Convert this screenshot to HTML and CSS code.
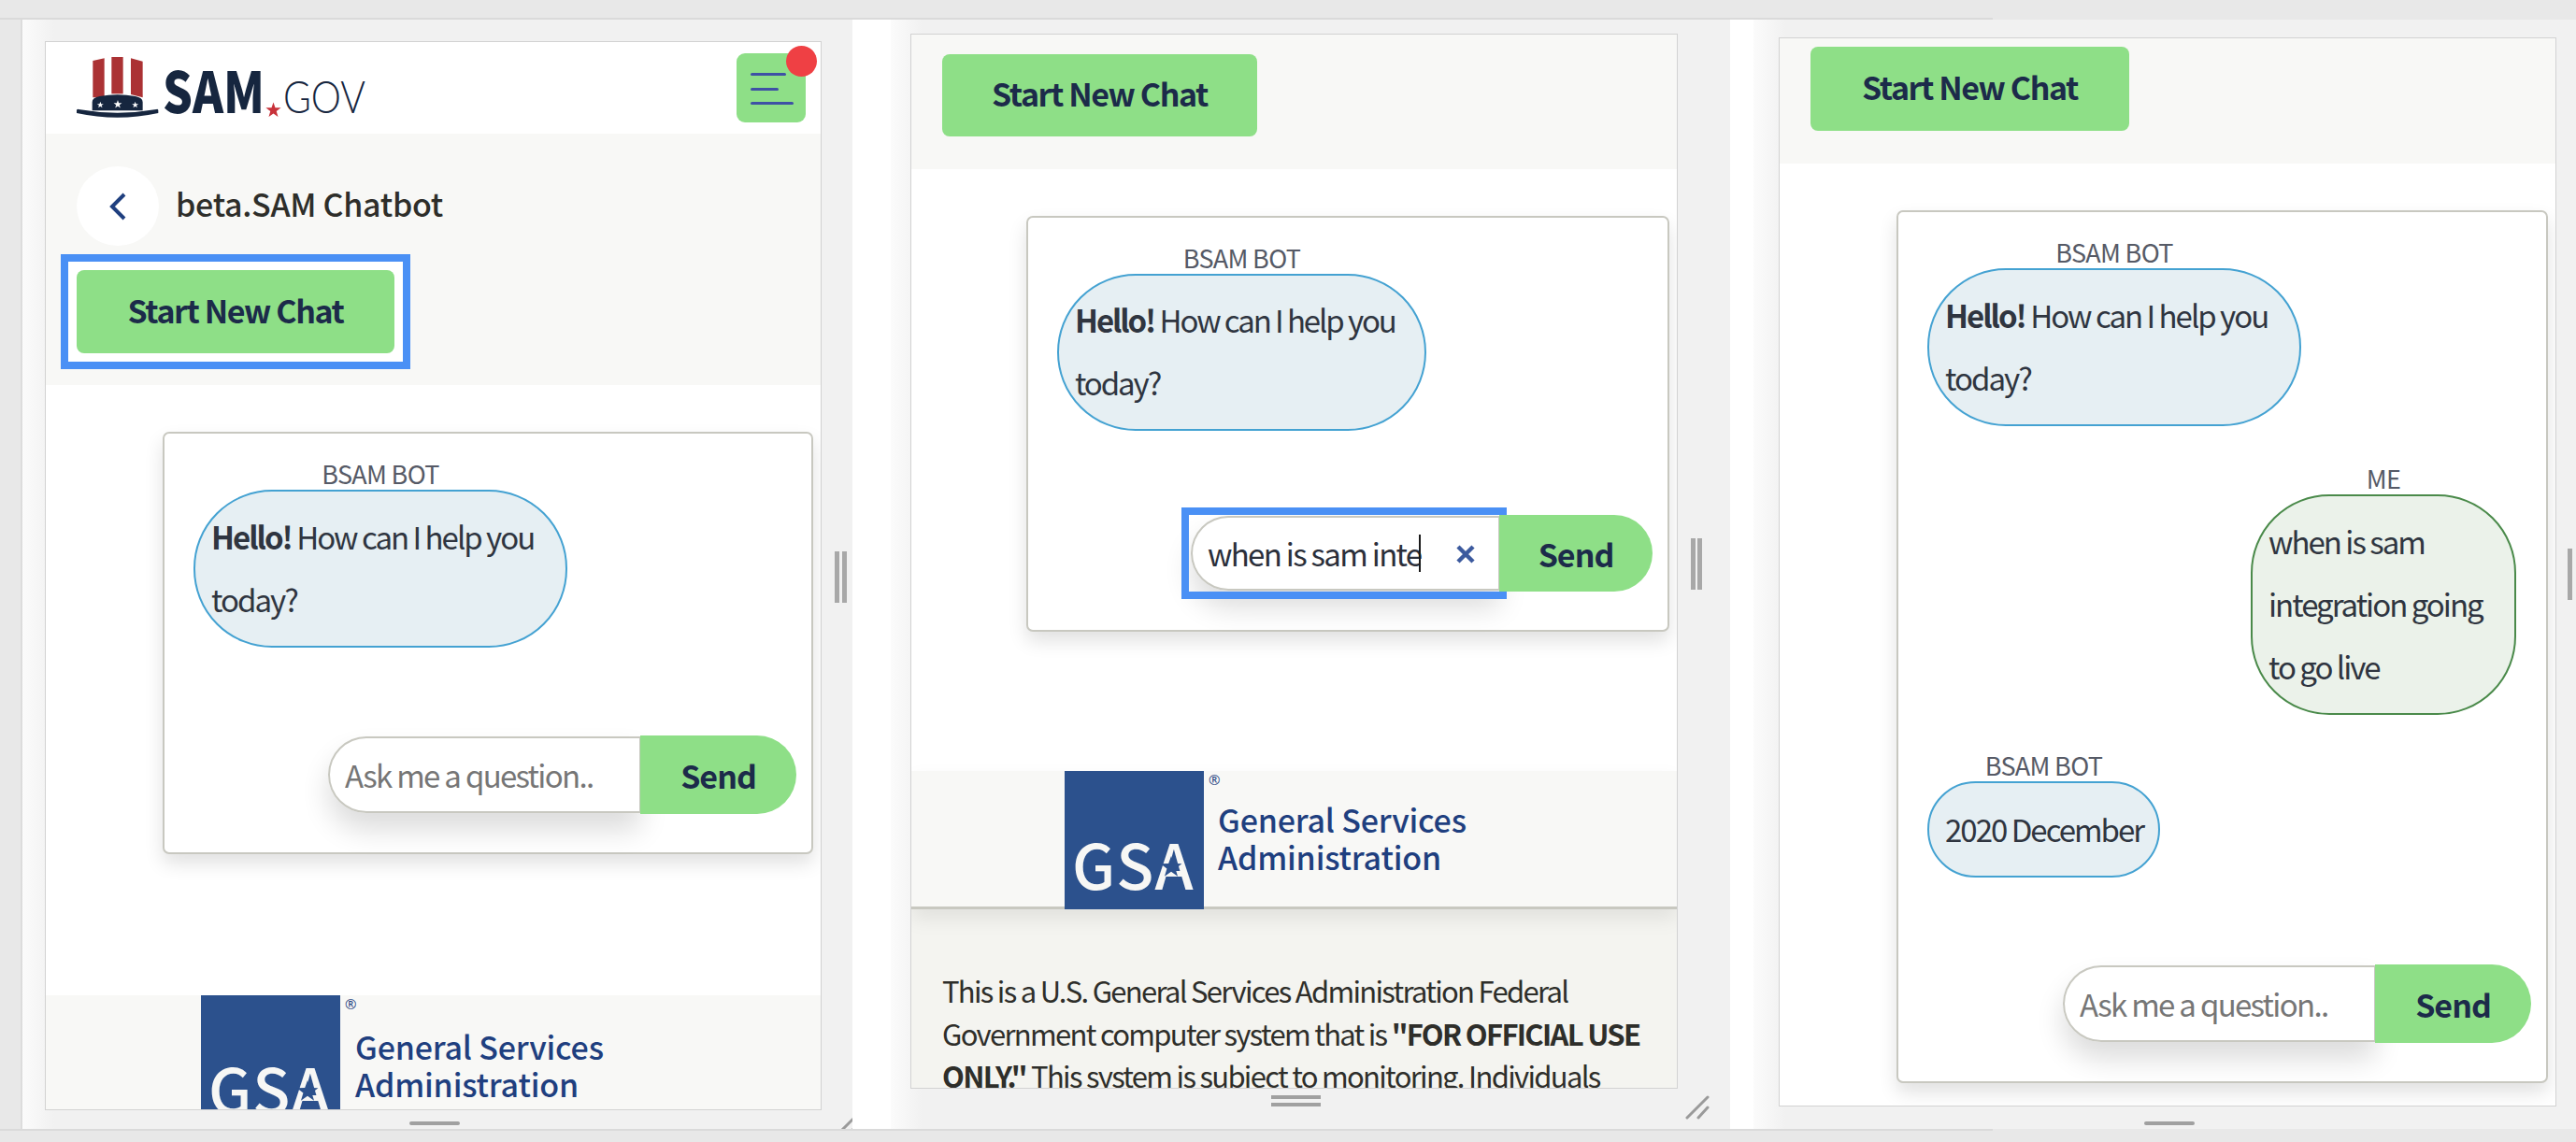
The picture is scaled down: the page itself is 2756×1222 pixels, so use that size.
FILE: index.html
```html
<!DOCTYPE html>
<html lang="en">
<head>
    <meta charset="UTF-8">
    <title>beta.SAM Chatbot</title>
    <link rel="stylesheet" href="styles.css">
</head>
<body>
    <div class="strip strip-top"><div class="strip-line"></div></div>
    <div class="stage">

        <!-- first window: landing state -->
        <section class="pane pane-one">
            <div class="frame">
                <header class="site-header">
                    <svg class="logo" viewBox="0 0 310 70" width="310" height="70">
                        <defs>
                            <polygon id="star" points="0,-1 .235,-.324 .951,-.309 .38,.124 .588,.809 0,.4 -.588,.809 -.38,.124 -.951,-.309 -.235,-.324"/>
                        </defs>
                        <g transform="translate(0 2) scale(.3333)">
                            <polygon fill="#ab3234" points="52,12 89,4 89,130 52,130"/>
                            <rect fill="#ab3234" x="112" y="0" width="37" height="118"/>
                            <polygon fill="#ab3234" points="174,4 212,14 212,130 174,120"/>
                            <path fill="#16263f" d="M50 172V145Q50 130 74 126Q131 116 188 126Q212 130 212 145V172Z"/>
                            <path fill="#16263f" d="M0 172Q0 166 6 168Q131 190 256 168Q262 166 262 172V180Q131 208 0 180Z"/>
                            <use href="#star" fill="#fff" transform="translate(76 154) scale(11)"/>
                            <use href="#star" fill="#fff" transform="translate(132 152) scale(14)"/>
                            <use href="#star" fill="#fff" transform="translate(188 154) scale(11)"/>
                        </g>
                        <text class="logo-sam" x="92" y="62" textLength="109" lengthAdjust="spacingAndGlyphs">SAM</text>
                        <use href="#star" fill="#c8323a" transform="translate(210.5 59) scale(8.5)"/>
                        <text class="logo-gov" x="221" y="62" textLength="88" lengthAdjust="spacingAndGlyphs">GOV</text>
                    </svg>
                    <button class="menu-btn">
                        <span class="menu-line line-a"></span>
                        <span class="menu-line line-b"></span>
                        <span class="menu-line line-c"></span>
                        <span class="menu-dot"></span>
                    </button>
                </header>
                <div class="band band-full">
                    <div class="title-row">
                        <a class="back-btn">
                            <svg viewBox="0 0 20 30" width="20" height="30"><polyline points="17,2 4,15 17,28" fill="none" stroke="#1f3f7f" stroke-width="4"/></svg>
                        </a>
                        <h1>beta.SAM Chatbot</h1>
                    </div>
                    <div class="focus-ring">
                        <button class="new-chat">Start New Chat</button>
                    </div>
                </div>
                <div class="card">
                    <div class="msg">
                        <div class="who">BSAM BOT</div>
                        <div class="bubble bot"><b>Hello!</b> How can I help you today?</div>
                    </div>
                    <div class="ask">
                        <div class="ask-field"><input type="text" placeholder="Ask me a question.."></div>
                        <button class="send">Send</button>
                    </div>
                </div>
                <footer class="gsa">
                    <div class="gsa-mark">
                        <span>GSA</span>
                        <svg class="gsa-star" viewBox="-1 -1 2 2" width="24" height="24"><polygon points="0,-1 .235,-.324 .951,-.309 .38,.124 .588,.809 0,.4 -.588,.809 -.38,.124 -.951,-.309 -.235,-.324"/></svg>
                    </div>
                    <div class="gsa-text">
                        <div class="gsa-reg">®</div>
                        <div class="gsa-name">General Services<br>Administration</div>
                    </div>
                </footer>
            </div>
            <div class="split-handle"></div>
            <div class="grip"></div>
            <svg class="resizer" viewBox="0 0 26 26" width="26" height="26"><path d="M2 24L24 2M14 24L24 13" stroke="#9a9a9a" stroke-width="3" stroke-linecap="round"/></svg>
        </section>

        <!-- second window: typing a question -->
        <section class="pane pane-two">
            <div class="frame">
                <div class="band band-short">
                    <button class="new-chat">Start New Chat</button>
                </div>
                <div class="card">
                    <div class="msg">
                        <div class="who">BSAM BOT</div>
                        <div class="bubble bot"><b>Hello!</b> How can I help you today?</div>
                    </div>
                    <div class="ask">
                        <div class="ask-field typing">
                            <input type="text" value="when is sam inte">
                            <span class="caret"></span>
                            <svg class="clear" viewBox="0 0 22 22" width="22" height="22"><path d="M3 3L19 19M19 3L3 19" stroke="#3c5a9e" stroke-width="4.5"/></svg>
                        </div>
                        <button class="send">Send</button>
                    </div>
                </div>
                <footer class="gsa">
                    <div class="gsa-mark">
                        <span>GSA</span>
                        <svg class="gsa-star" viewBox="-1 -1 2 2" width="24" height="24"><polygon points="0,-1 .235,-.324 .951,-.309 .38,.124 .588,.809 0,.4 -.588,.809 -.38,.124 -.951,-.309 -.235,-.324"/></svg>
                    </div>
                    <div class="gsa-text">
                        <div class="gsa-reg">®</div>
                        <div class="gsa-name">General Services<br>Administration</div>
                    </div>
                </footer>
                <p class="notice">This is a U.S. General Services Administration Federal Government computer system that is <b>"FOR OFFICIAL USE ONLY."</b> This system is subject to monitoring. Individuals</p>
            </div>
            <div class="split-handle"></div>
            <div class="grip grip-double"></div>
            <svg class="resizer" viewBox="0 0 26 26" width="26" height="26"><path d="M2 24L24 2M14 24L24 13" stroke="#9a9a9a" stroke-width="3" stroke-linecap="round"/></svg>
        </section>

        <!-- third window: answered -->
        <section class="pane pane-three">
            <div class="frame">
                <div class="band band-short">
                    <button class="new-chat">Start New Chat</button>
                </div>
                <div class="card">
                    <div class="msg">
                        <div class="who">BSAM BOT</div>
                        <div class="bubble bot"><b>Hello!</b> How can I help you today?</div>
                    </div>
                    <div class="msg msg-me">
                        <div class="who">ME</div>
                        <div class="bubble me">when is sam integration going to go live</div>
                    </div>
                    <div class="msg msg-answer">
                        <div class="who">BSAM BOT</div>
                        <div class="bubble bot answer">2020 December</div>
                    </div>
                    <div class="ask">
                        <div class="ask-field"><input type="text" placeholder="Ask me a question.."></div>
                        <button class="send">Send</button>
                    </div>
                </div>
            </div>
            <div class="split-handle"></div>
            <div class="grip"></div>
        </section>
    </div>
    <div class="strip strip-bottom"><div class="strip-line"></div></div>
</body>
</html>
```

FILE: styles.css
```css
* {
    box-sizing: border-box;
}
body {
    margin: 0;
    width: 2756px;
    height: 1222px;
    overflow: hidden;
    background-color: #e8e8e8;
    font-family: "Noto Sans CJK SC", "Noto Sans", sans-serif;
    color: #2f3540;
}
button {
    font-family: inherit;
    border: none;
}

/* grey strips above and below the windows */
.strip {
    height: 21px;
    display: flex;
    align-items: flex-end;
}
.strip-bottom {
    height: 14px;
    align-items: flex-start;
}
.strip-line {
    width: 2132px;
    height: 2px;
    background-color: #dadada;
}
.stage {
    display: flex;
    height: 1187px;
    margin-left: 22px;
    background-color: #fff;
}

/* windows */
.pane {
    position: relative;
    overflow: hidden;
    background: linear-gradient(90deg, #fbfbfb, #f1f1f1 34px);
    flex-shrink: 0;
}
.pane-one {
    width: 890px;
    margin-right: 41px;
    padding: 23px 0 0 24px;
    border-left: 2px solid #dcdcdc;
}
.pane-two {
    width: 898px;
    margin-right: 25px;
    padding: 15px 0 0 21px;
}
.pane-three {
    width: 880px;
    padding: 19px 0 0 27px;
}
.frame {
    display: flex;
    flex-direction: column;
    overflow: hidden;
    background-color: #fff;
    border: 1px solid #d2d2d2;
}
.pane-one .frame {
    width: 831px;
    height: 1144px;
}
.pane-two .frame {
    width: 821px;
    height: 1129px;
}
.pane-three .frame {
    width: 832px;
    height: 1144px;
}

/* top of the first window */
.site-header {
    display: flex;
    flex-shrink: 0;
    justify-content: space-between;
    align-items: center;
    height: 98px;
    padding: 0 16px 0 33px;
}
.logo-sam {
    font-size: 61px;
    font-weight: 900;
    fill: #16263f;
}
.logo-gov {
    font-family: Lato, sans-serif;
    font-size: 48px;
    font-weight: 300;
    fill: #16263f;
}
.menu-btn {
    position: relative;
    display: flex;
    flex-direction: column;
    justify-content: center;
    gap: 12.5px;
    width: 74px;
    height: 74px;
    padding: 2px 0 0 15px;
    background-color: #8edf87;
    border-radius: 9px;
}
.menu-line {
    display: block;
    height: 3px;
    background-color: #3f51a5;
    border-radius: 2px;
}
.line-a { width: 38px; }
.line-b { width: 30px; }
.line-c { width: 46px; }
.menu-dot {
    position: absolute;
    top: -8px;
    right: -12px;
    width: 33px;
    height: 33px;
    background-color: #ef4044;
    border-radius: 50%;
}

/* off-white band with the new chat button */
.band {
    flex-shrink: 0;
    background-color: #f8f8f6;
    padding-left: 33px;
}
.band-full {
    height: 269px;
    padding-top: 35px;
}
.band-short {
    height: 144px;
    padding-top: 21px;
}
.pane-three .band-short {
    height: 134px;
    padding-top: 9px;
}
.title-row {
    display: flex;
    align-items: center;
    gap: 18px;
    margin-bottom: 9px;
}
.back-btn {
    display: flex;
    align-items: center;
    justify-content: center;
    width: 88px;
    height: 85px;
    background-color: #fff;
    border-radius: 50%;
}
h1 {
    margin: 0;
    padding-bottom: 6px;
    font-size: 34px;
    font-weight: 500;
    letter-spacing: -0.3px;
    color: #2e2e2a;
}
.new-chat {
    display: block;
    width: 340px;
    height: 89px;
    padding: 0 0 5px;
    font-size: 34px;
    font-weight: 700;
    letter-spacing: -1.4px;
    color: #1c2b4a;
    background-color: #8edf87;
    border-radius: 8px;
}
.pane-two .new-chat {
    width: 337px;
    height: 88px;
}
.pane-three .new-chat {
    width: 341px;
    height: 90px;
}
.focus-ring {
    width: fit-content;
    margin-left: -17px;
    padding: 9px;
    background-color: #fff;
    border: 8px solid #4a90f5;
}

/* chat card */
.card {
    display: flex;
    flex-direction: column;
    flex-shrink: 0;
    background-color: #fff;
    border: 2px solid #c8c8c0;
    border-radius: 7px;
    box-shadow: 0 10px 20px rgba(0, 0, 0, 0.12);
    padding: 30px 16px 41px 31px;
}
.pane-one .card {
    width: 696px;
    height: 452px;
    margin: 50px 0 0 125px;
}
.pane-two .card {
    width: 688px;
    height: 445px;
    margin: 50px 0 0 123px;
}
.pane-three .card {
    width: 697px;
    height: 934px;
    margin: 50px 0 0 125px;
}
.msg {
    width: fit-content;
}
.msg-me {
    align-self: flex-end;
    margin-top: 43px;
    margin-right: 16px;
}
.msg-answer {
    margin-top: 41px;
}
.who {
    height: 30px;
    font-size: 27px;
    line-height: 26px;
    letter-spacing: -0.7px;
    text-align: center;
    color: #565a66;
    white-space: nowrap;
}
.bubble {
    width: 400px;
    padding: 15px 16px 16px 17px;
    font-size: 33px;
    line-height: 67px;
    letter-spacing: -2px;
    border: 2px solid #44a2d2;
    border-radius: 84px;
}
.pane-two .bubble {
    width: 395px;
    padding-top: 14px;
    letter-spacing: -2.1px;
}
.bot {
    background-color: #e6eff3;
}
.me {
    width: 284px;
    background-color: #ebf2ea;
    border-color: #4a8a4a;
}
.answer {
    width: auto;
    padding: 16px 16px 16px 17px;
}
.ask {
    display: flex;
    align-self: flex-end;
    margin-top: auto;
}
.ask-field {
    position: relative;
    display: flex;
    width: 334px;
    height: 82px;
    margin-top: 1px;
    border-radius: 42px 0 0 42px;
    box-shadow: 0 18px 30px rgba(0, 0, 0, 0.14);
}
.ask-field input {
    position: relative;
    width: 100%;
    padding: 0 16px;
    font-family: inherit;
    font-size: 33px;
    letter-spacing: -1.7px;
    color: #2b2f3a;
    background-color: #fff;
    border: 2px solid #c8c8c0;
    border-right-width: 1px;
    border-radius: 42px 0 0 42px;
    outline: none;
}
.ask-field input::placeholder {
    color: #767676;
    opacity: 1;
}
.send {
    position: relative;
    width: 167px;
    height: 84px;
    font-size: 34px;
    font-weight: 700;
    letter-spacing: -1px;
    color: #1c2b4a;
    background-color: #8edf87;
    border-radius: 0 42px 42px 0;
}
.pane-two .send {
    width: 164px;
    height: 82px;
}
.typing {
    width: 330px;
    height: 80px;
}
/* square focus ring, the send button sits over its right edge */
.typing::before {
    content: "";
    position: absolute;
    top: -9px;
    left: -10px;
    right: -8px;
    bottom: -9px;
    border: 8px solid #4a90f5;
}
.caret {
    position: absolute;
    top: 20px;
    left: 244px;
    width: 2px;
    height: 40px;
    background-color: #1a1a1a;
}
.clear {
    position: absolute;
    top: 30px;
    right: 25px;
}

/* gsa footer */
.gsa {
    position: relative;
    display: flex;
    flex-shrink: 0;
    height: 148px;
    padding-left: 166px;
    background-color: #f8f8f6;
}
.pane-one .gsa {
    margin-top: 151px;
}
.pane-two .gsa {
    margin-top: 149px;
    padding-left: 164px;
    border-bottom: 3px solid #c8c8c0;
    box-shadow: 0 10px 20px rgba(0, 0, 0, 0.08);
}
.gsa-mark {
    position: relative;
    width: 149px;
    height: 148px;
    padding: 52px 0 0 8px;
    font-size: 66px;
    line-height: 92px;
    font-weight: 500;
    letter-spacing: 1px;
    color: #f7f7f5;
    background-color: #2c518d;
}
.gsa-star {
    position: absolute;
    top: 91px;
    left: 102px;
    fill: #2c518d;
}
.gsa-text {
    margin-left: 5px;
}
.gsa-reg {
    height: 18px;
    font-family: "Open Sans", sans-serif;
    font-size: 15px;
    line-height: 18px;
    color: #1f3f7f;
}
.gsa-name {
    margin: 17px 0 0 11px;
    font-size: 34px;
    line-height: 40px;
    font-weight: 500;
    letter-spacing: -0.2px;
    white-space: nowrap;
    color: #1f3f7f;
}
.pane-two .gsa-name {
    margin: 14px 0 0 10px;
}
.notice {
    flex-grow: 1;
    margin: 0;
    padding: 64px 30px 0 33px;
    font-size: 31px;
    line-height: 45.5px;
    letter-spacing: -1.7px;
    color: #2e2e2a;
    background-color: #f4f4f0;
}

/* window furniture */
.split-handle {
    position: absolute;
    top: 569px;
    right: 6px;
    width: 13px;
    height: 55px;
    border-left: 5px solid #a8a8a8;
    border-right: 5px solid #a8a8a8;
}
.pane-two .split-handle {
    top: 555px;
    right: 30px;
    width: 12px;
}
.pane-three .split-handle {
    top: 566px;
    right: 4px;
    width: 4px;
    border-right: none;
}
.grip {
    position: absolute;
    left: 414px;
    bottom: 4px;
    width: 54px;
    height: 4px;
    background-color: #a0a0a0;
    border-radius: 2px;
}
.pane-two .grip {
    left: 407px;
    bottom: 24px;
    width: 53px;
    height: 12px;
    background: none;
    border-top: 4px solid #a0a0a0;
    border-bottom: 4px solid #a0a0a0;
    border-radius: 0;
}
.pane-three .grip {
    left: 418px;
}
.resizer {
    position: absolute;
    right: -4px;
    bottom: -12px;
}
.pane-two .resizer {
    right: 22px;
    bottom: 10px;
}
```
